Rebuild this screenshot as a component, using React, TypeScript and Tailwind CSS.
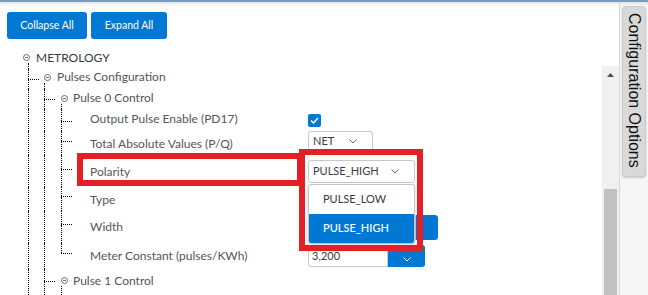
import React from 'react'

const D = 'border-dotted border-black'

function Minus() {
  return (
    <svg width="7" height="7" viewBox="0 0 7 7" className="block shrink-0">
      <circle cx="3.5" cy="3.5" r="3" fill="none" stroke="#6b6b6b" strokeWidth="1" />
      <rect x="2" y="3" width="3" height="1" fill="#6b6b6b" />
    </svg>
  )
}

function Chevron({ color = '#6b6b6b', className = '' }: { color?: string; className?: string }) {
  return (
    <svg width="8" height="5" viewBox="0 0 8 5" className={className}>
      <path d="M0.5 0.5 L4 4 L7.5 0.5" fill="none" stroke={color} strokeWidth="1" />
    </svg>
  )
}

// expand/collapse icon with the stub line running down to the children
function Toggle({ top, stub = '' }: { top: string; stub?: string }) {
  return (
    <div className="w-[7px] shrink-0 flex flex-col">
      <div className={`${top} shrink-0`} />
      <Minus />
      <div className={`flex-1 mt-[2px] border-l ${D} ${stub}`} />
    </div>
  )
}

function Guide({ w }: { w: string }) {
  return <div className={`${w} shrink-0 border-l ${D}`} />
}

function Conn({ w, top, last = false }: { w: string; top: string; last?: boolean }) {
  return (
    <div className={`${w} shrink-0 flex flex-col`}>
      <div className={`${top} shrink-0 border-l ${D}`} />
      <div className={`w-[11px] h-px shrink-0 border-t ${D}`} />
      <div className={`flex-1 ${last ? '' : `border-l ${D}`}`} />
    </div>
  )
}

function Label({ text, shift = '', ml = 'ml-[12px]', color = 'text-[#555]' }: { text: string; shift?: string; ml?: string; color?: string }) {
  return (
    <div className={`flex items-center ${ml} ${shift} text-[12px] ${color} whitespace-nowrap`}>{text}</div>
  )
}

function Row({ h, tree, control, align = 'items-center' }: { h: string; tree: React.ReactNode; control?: React.ReactNode; align?: string }) {
  return (
    <div className={`flex ${h}`}>
      <div className="w-[308px] shrink-0 flex">{tree}</div>
      <div className={`flex ${align}`}>{control}</div>
    </div>
  )
}

function Select({ value, w, h }: { value: string; w: string; h: string }) {
  return (
    <div className={`${w} ${h} flex items-center pl-[4px] pr-[15px] border border-[#c8c8c8] rounded-[3px] bg-white text-[11px] text-[#3a3a3a]`}>
      <span>{value}</span>
      <Chevron className="ml-auto" />
    </div>
  )
}

const leafGuides = (
  <>
    <div className="w-[28px] shrink-0" />
    <Guide w="w-[16px]" />
    <Guide w="w-[17px]" />
  </>
)

export default function App() {
  return (
    <div className="w-[648px] h-[295px] overflow-hidden bg-white flex flex-col relative font-['Lato',sans-serif]">
      <div className="h-[2px] shrink-0 bg-[#7b9dbd]" />
      <div className="flex-1 flex min-h-0">
        <div className="w-[602px] shrink-0 flex flex-col">
          <div className="flex gap-[4px] ml-[7px] mt-[10px]">
            <button className="w-[80px] h-[27px] rounded-[3px] bg-[#0078d4] text-white text-[10.5px]">Collapse All</button>
            <button className="w-[76px] h-[27px] rounded-[3px] bg-[#0078d4] text-white text-[10.5px]">Expand All</button>
          </div>

          <div className="mt-[8px] flex flex-col">
            <Row
              h="h-[22px]"
              tree={
                <>
                  <div className="w-[23px] shrink-0" />
                  <Toggle top="h-[7px]" stub="ml-[5px]" />
                  <Label text="METROLOGY" ml="ml-[6px]" color="text-[#3a3a3a]" />
                </>
              }
            />
            <Row
              h="h-[20px]"
              tree={
                <>
                  <div className="w-[28px] shrink-0" />
                  <Conn w="w-[16px]" top="h-[10px]" />
                  <Toggle top="h-[5px]" />
                  <Label text="Pulses Configuration" ml="ml-[6px]" shift="pb-[4px]" />
                </>
              }
            />
            <Row
              h="h-[20px]"
              tree={
                <>
                  <div className="w-[28px] shrink-0" />
                  <Guide w="w-[16px]" />
                  <Conn w="w-[17px]" top="h-[10px]" />
                  <Toggle top="h-[6px]" />
                  <Label text="Pulse 0 Control" ml="ml-[5px]" shift="pb-[3px]" />
                </>
              }
            />
            <Row
              h="h-[22px]"
              tree={
                <>
                  {leafGuides}
                  <Conn w="w-[17px]" top="h-[12px]" />
                  <Label text="Output Pulse Enable (PD17)" shift="pb-[3px]" />
                </>
              }
              control={
                <div className="w-[13px] h-[13px] rounded-[2px] bg-[#0078d4] flex items-center justify-center">
                  <svg width="9" height="7" viewBox="0 0 9 7">
                    <path d="M1 3.5 L3.5 6 L8 1" fill="none" stroke="white" strokeWidth="1.4" />
                  </svg>
                </div>
              }
            />
            <Row
              h="h-[24px]"
              align="items-start"
              tree={
                <>
                  {leafGuides}
                  <Conn w="w-[17px]" top="h-[10px]" />
                  <Label text="Total Absolute Values (P/Q)" shift="pt-[2px]" />
                </>
              }
              control={<Select value="NET" w="w-[65px]" h="h-[20px]" />}
            />
            <Row
              h="h-[32px]"
              tree={
                <>
                  {leafGuides}
                  <Conn w="w-[17px]" top="h-[14px]" />
                  <Label text="Polarity" shift="pt-[2px]" />
                </>
              }
              control={
                <div className="relative">
                  <Select value="PULSE_HIGH" w="w-[107px]" h="h-[23px]" />
                  <div className="absolute left-0 top-[24px] z-10 w-[107px] bg-white border border-[#c6c6c6] rounded-[3px] overflow-hidden shadow-[0_2px_4px_rgba(0,0,0,0.15)] text-[11px]">
                    <div className="h-[29px] flex items-center pl-[14px] text-[#3a3a3a]">PULSE_LOW</div>
                    <div className="h-[29px] flex items-center pl-[14px] bg-[#0078d4] text-white font-medium">PULSE_HIGH</div>
                  </div>
                </div>
              }
            />
            <Row
              h="h-[24px]"
              tree={
                <>
                  {leafGuides}
                  <Conn w="w-[17px]" top="h-[9px]" />
                  <Label text="Type" shift="pt-[2px]" />
                </>
              }
              control={<Select value="" w="w-[107px]" h="h-[22px]" />}
            />
            <Row
              h="h-[32px]"
              tree={
                <>
                  {leafGuides}
                  <Conn w="w-[17px]" top="h-[13px]" />
                  <Label text="Width" />
                </>
              }
              control={
                <div className="flex h-[25px]">
                  <div className="w-[108px] border border-[#c8c8c8] rounded-l-[3px] bg-white" />
                  <div className="w-[22px] bg-[#0078d4] rounded-r-[3px]" />
                </div>
              }
            />
            <Row
              h="h-[26px]"
              tree={
                <>
                  {leafGuides}
                  <Conn w="w-[17px]" top="h-[10px]" last />
                  <Label text="Meter Constant (pulses/KWh)" />
                </>
              }
              control={
                <div className="flex h-[22px]">
                  <div className="w-[80px] border border-[#c8c8c8] rounded-l-[3px] bg-white flex items-center pl-[3px] text-[11px] text-[#3a3a3a]">3,200</div>
                  <div className="w-[37px] bg-[#0078d4] rounded-r-[3px] flex items-center justify-center">
                    <Chevron color="white" className="mt-[6px]" />
                  </div>
                </div>
              }
            />
            <Row
              h="h-[26px]"
              tree={
                <>
                  <div className="w-[28px] shrink-0" />
                  <Guide w="w-[16px]" />
                  <Conn w="w-[17px]" top="h-[12px]" />
                  <Toggle top="h-[8px]" />
                  <Label text="Pulse 1 Control" ml="ml-[5px]" shift="pb-[3px]" />
                </>
              }
            />
          </div>
        </div>

        {/* scrollbar */}
        <div className="w-[17px] shrink-0 flex flex-col">
          <div className="h-[64px] shrink-0" />
          <div className="flex-1 bg-[#f0f0f0] flex flex-col">
            <div className="h-[17px] shrink-0 flex items-center justify-center">
              <svg width="7" height="4" viewBox="0 0 7 4">
                <path d="M0 4 L3.5 0 L7 4 Z" fill="#505050" />
              </svg>
            </div>
            <div className="h-[106px] shrink-0" />
            <div className="flex-1 mx-[2px] bg-[#c1c1c1]" />
          </div>
        </div>

        {/* side panel */}
        <div className="w-[29px] shrink-0 border-l border-[#d8d8d8] bg-[#f6f6f6] flex flex-col">
          <div className="ml-[2px] mt-[4px] w-[24px] h-[171px] rounded-[4px] bg-[#d9d9d9] border border-[#cbcbcb] shadow-[0_1px_2px_rgba(0,0,0,0.2)] flex justify-center pt-[6px]">
            <span className="[writing-mode:vertical-rl] font-['Liberation_Sans',Arial,sans-serif] text-[16px] leading-[22px] text-[#111]">
              Configuration Options
            </span>
          </div>
        </div>
      </div>

      <div className="absolute top-[2px] left-0 right-0 h-[4px] bg-linear-to-b from-[#e4e4e4] to-transparent" />

      {/* annotation boxes */}
      <div className="absolute left-[77px] top-[153px] w-[226px] h-[33px] border-[6px] border-[#e41f26] z-20" />
      <div className="absolute left-[299px] top-[149px] w-[124px] h-[102px] border-[6px] border-[#e41f26] z-20" />
    </div>
  )
}
